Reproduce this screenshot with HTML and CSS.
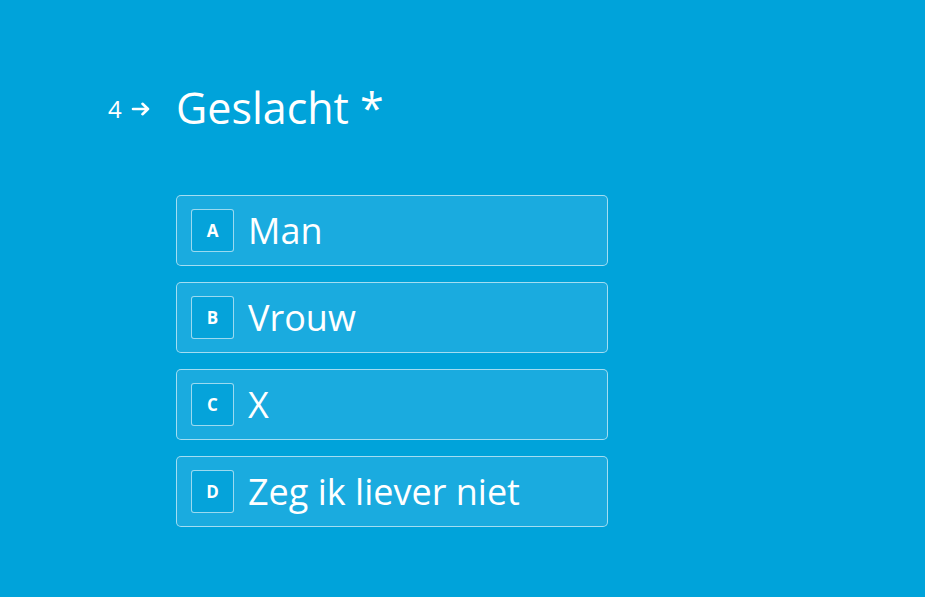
FILE: index.html
```html
<!DOCTYPE html>
<html lang="nl">
<head>
    <meta charset="UTF-8">
    <meta name="viewport" content="width=device-width, initial-scale=1.0">
    <title>Geslacht</title>
    <link rel="stylesheet" href="styles.css">
</head>
<body>
    <div class="vraag">
        <div class="vraag-kop">
            <div class="nummer">
                <span>4</span>
                <svg width="20" height="14" viewBox="0 0 20 14"><path d="M2 7h15M11.5 1.8 17 7l-5.5 5.2" fill="none" stroke="#fff" stroke-width="2.6" stroke-linecap="round" stroke-linejoin="round"/></svg>
            </div>
            <h1>Geslacht *</h1>
        </div>
        <ul class="opties">
            <li class="optie"><span class="toets">A</span>Man</li>
            <li class="optie"><span class="toets">B</span>Vrouw</li>
            <li class="optie"><span class="toets">C</span>X</li>
            <li class="optie"><span class="toets">D</span>Zeg ik liever niet</li>
        </ul>
    </div>
</body>
</html>
```

FILE: styles.css
```css
* {
    margin: 0;
    padding: 0;
    box-sizing: border-box;
}

body {
    font-family: "Open Sans", Arial, sans-serif;
    background-color: #00a3da;
    color: #fff;
    height: 100vh;
}

.vraag {
    padding: 80px 0 0 108px;
}

.vraag-kop {
    display: flex;
    align-items: center;
}

.nummer {
    width: 68px;
    display: flex;
    align-items: center;
    gap: 9px;
    font-size: 24px;
    padding-top: 1px;
}

.vraag-kop h1 {
    font-size: 43px;
    font-weight: 400;
    line-height: 56px;
}

.opties {
    list-style: none;
    margin: 59px 0 0 68px;
    width: 432px;
    display: flex;
    flex-direction: column;
    gap: 16px;
}

.optie {
    height: 71px;
    background-color: #1aabdf;
    border: 1px solid rgba(255, 255, 255, 0.6);
    border-radius: 5px;
    display: flex;
    align-items: center;
    padding-left: 14px;
    font-size: 36px;
}

.toets {
    width: 43px;
    height: 43px;
    border: 1px solid rgba(255, 255, 255, 0.6);
    border-radius: 3px;
    background-color: #05a3da;
    display: flex;
    align-items: center;
    justify-content: center;
    font-size: 17px;
    font-weight: 700;
    margin-right: 14px;
}
```
